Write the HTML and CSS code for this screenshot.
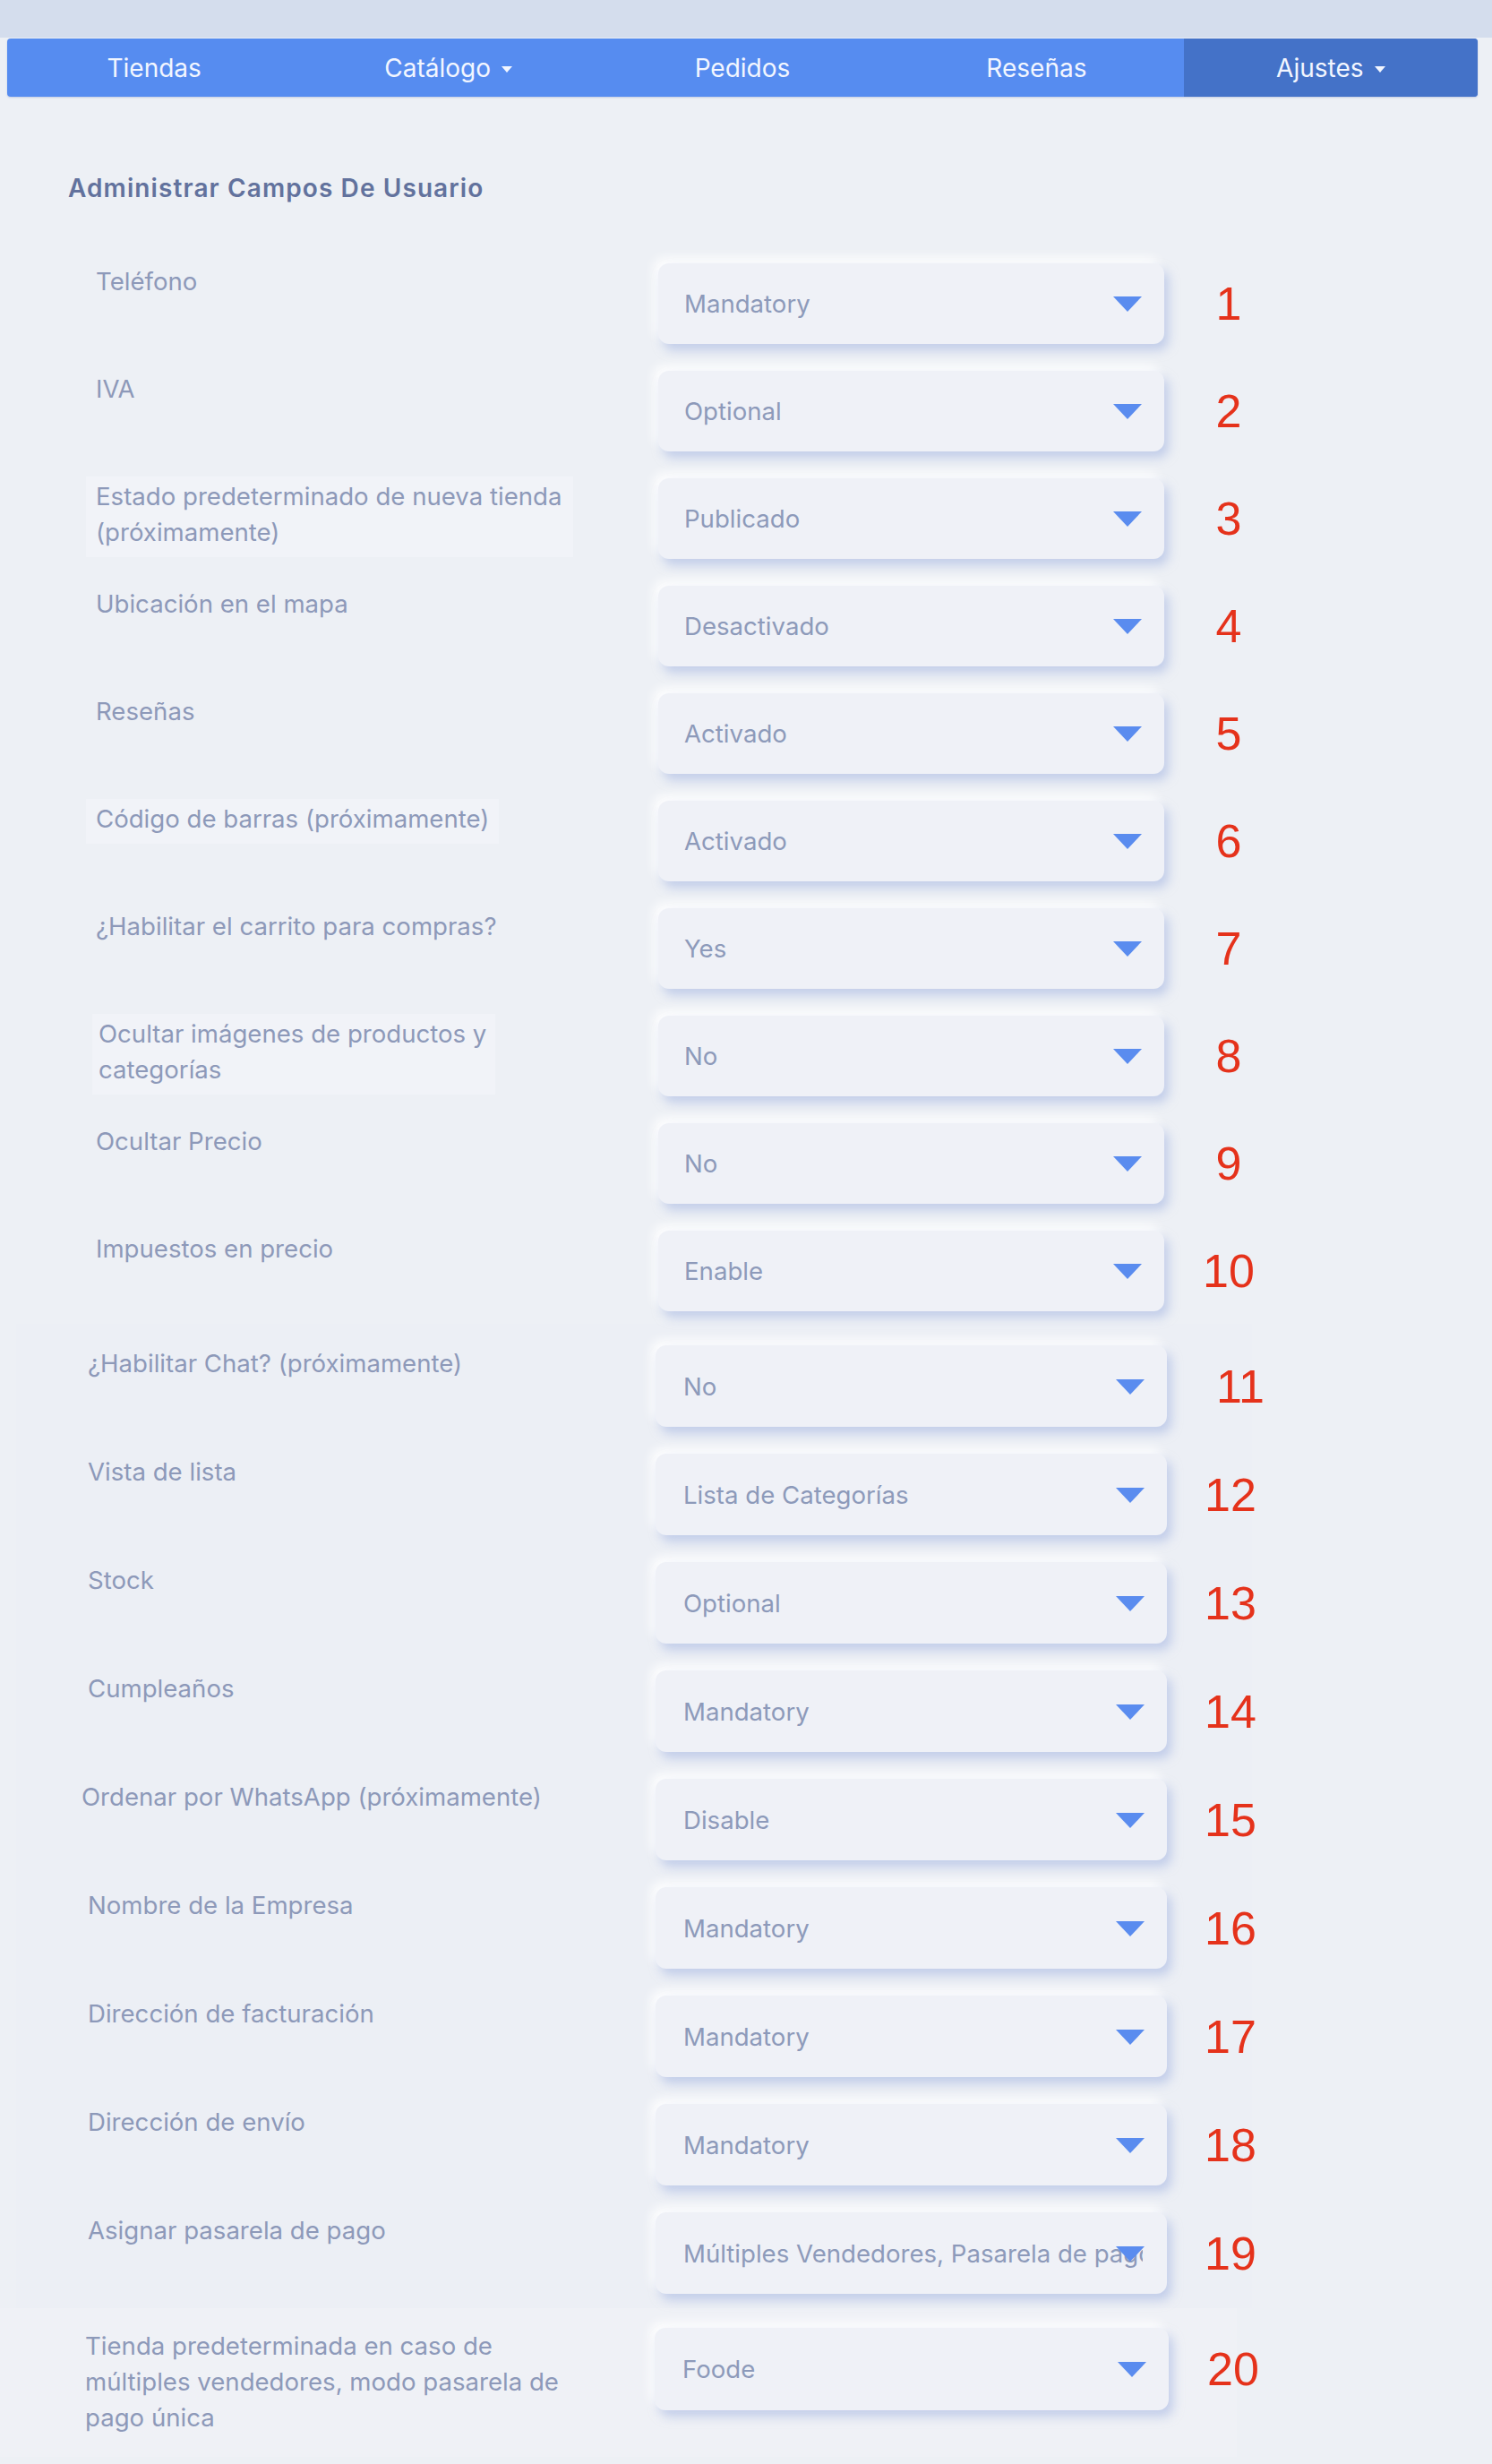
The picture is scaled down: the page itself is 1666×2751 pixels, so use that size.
FILE: index.html
```html
<!DOCTYPE html>
<html lang="es">
<head>
<meta charset="utf-8">
<title>Administrar Campos De Usuario</title>
<link rel="stylesheet" href="styles.css">
</head>
<body>
<div class="topband"></div>
<nav class="nav">
  <a class="nav-item">Tiendas</a>
  <a class="nav-item">Catálogo <span class="caret"></span></a>
  <a class="nav-item">Pedidos</a>
  <a class="nav-item">Reseñas</a>
  <a class="nav-item active">Ajustes <span class="caret"></span></a>
</nav>

<h1 class="heading">Administrar Campos De Usuario</h1>

<section class="group group-a">
  <div class="row"><div class="label"><span>Teléfono</span></div><div class="select"><span class="value">Mandatory</span><span class="arrow"></span></div><div class="num">1</div></div>
  <div class="row"><div class="label"><span>IVA</span></div><div class="select"><span class="value">Optional</span><span class="arrow"></span></div><div class="num">2</div></div>
  <div class="row"><div class="label"><span class="hl hl-wide">Estado predeterminado de nueva tienda (próximamente)</span></div><div class="select"><span class="value">Publicado</span><span class="arrow"></span></div><div class="num">3</div></div>
  <div class="row"><div class="label"><span>Ubicación en el mapa</span></div><div class="select"><span class="value">Desactivado</span><span class="arrow"></span></div><div class="num">4</div></div>
  <div class="row"><div class="label"><span>Reseñas</span></div><div class="select"><span class="value">Activado</span><span class="arrow"></span></div><div class="num">5</div></div>
  <div class="row"><div class="label"><span class="hl">Código de barras (próximamente)</span></div><div class="select"><span class="value">Activado</span><span class="arrow"></span></div><div class="num">6</div></div>
  <div class="row"><div class="label"><span>¿Habilitar el carrito para compras?</span></div><div class="select"><span class="value">Yes</span><span class="arrow"></span></div><div class="num">7</div></div>
  <div class="row"><div class="label"><span class="hl hl-narrow">Ocultar imágenes de productos y categorías</span></div><div class="select"><span class="value">No</span><span class="arrow"></span></div><div class="num">8</div></div>
  <div class="row"><div class="label"><span>Ocultar Precio</span></div><div class="select"><span class="value">No</span><span class="arrow"></span></div><div class="num">9</div></div>
  <div class="row"><div class="label"><span>Impuestos en precio</span></div><div class="select"><span class="value">Enable</span><span class="arrow"></span></div><div class="num">10</div></div>
</section>

<section class="group group-b">
  <div class="row"><div class="label"><span>¿Habilitar Chat? (próximamente)</span></div><div class="select"><span class="value">No</span><span class="arrow"></span></div><div class="num num-shift">11</div></div>
  <div class="row"><div class="label"><span>Vista de lista</span></div><div class="select"><span class="value">Lista de Categorías</span><span class="arrow"></span></div><div class="num">12</div></div>
  <div class="row"><div class="label"><span>Stock</span></div><div class="select"><span class="value">Optional</span><span class="arrow"></span></div><div class="num">13</div></div>
  <div class="row"><div class="label"><span>Cumpleaños</span></div><div class="select"><span class="value">Mandatory</span><span class="arrow"></span></div><div class="num">14</div></div>
  <div class="row"><div class="label label-left"><span>Ordenar por WhatsApp (próximamente)</span></div><div class="select"><span class="value">Disable</span><span class="arrow"></span></div><div class="num">15</div></div>
  <div class="row"><div class="label"><span>Nombre de la Empresa</span></div><div class="select"><span class="value">Mandatory</span><span class="arrow"></span></div><div class="num">16</div></div>
  <div class="row"><div class="label"><span>Dirección de facturación</span></div><div class="select"><span class="value">Mandatory</span><span class="arrow"></span></div><div class="num">17</div></div>
  <div class="row"><div class="label"><span>Dirección de envío</span></div><div class="select"><span class="value">Mandatory</span><span class="arrow"></span></div><div class="num">18</div></div>
  <div class="row"><div class="label"><span>Asignar pasarela de pago</span></div><div class="select"><span class="value">Múltiples Vendedores, Pasarela de pago única</span><span class="arrow"></span></div><div class="num">19</div></div>
</section>

<section class="group group-c">
  <div class="row"><div class="label"><span>Tienda predeterminada en caso de múltiples vendedores, modo pasarela de pago única</span></div><div class="select"><span class="value">Foode</span><span class="arrow"></span></div><div class="num">20</div></div>
</section>
</body>
</html>
```

FILE: styles.css
```css
html, body {
  margin: 0;
  padding: 0;
}
body {
  background: #edf0f5;
  font-family: "Inter", "Noto Sans", sans-serif;
  min-height: 2751px;
}

.topband {
  height: 42px;
  background: #d4dded;
}

.nav {
  display: grid;
  grid-template-columns: repeat(5, 1fr);
  height: 65px;
  margin: 1px 16px 0 8px;
  background: #568cf0;
  border-radius: 4px;
  box-shadow: 0 1px 2px rgba(70, 100, 170, 0.25);
}
.nav-item {
  display: flex;
  align-items: center;
  justify-content: center;
  gap: 12px;
  color: #f2f6ff;
  font-size: 28px;
  line-height: 1;
}
.nav-item.active {
  background: #4472c8;
  border-radius: 0 4px 4px 0;
}
.caret {
  width: 0;
  height: 0;
  border-left: 6px solid transparent;
  border-right: 6px solid transparent;
  border-top: 7px solid #f2f6ff;
  margin-top: 3px;
}

.heading {
  margin: 82px 0 0 76px;
  font-size: 28px;
  line-height: 40px;
  font-weight: 600;
  letter-spacing: 1.1px;
  color: #62729d;
}

.group {
  display: flex;
  flex-direction: column;
  gap: 30px;
}
.group-a {
  margin-top: 64px;
  padding: 0 0 14px 107px;
}
.group-b {
  margin-left: 18px;
  width: 1380px;
  padding: 24px 0 16px 80px;
  box-sizing: border-box;
  background: #eceff5;
}
.group-c {
  width: 1381px;
  padding: 22px 0 24px 95px;
  box-sizing: border-box;
  background: #eff1f6;
}

.row {
  display: flex;
  align-items: flex-start;
}

.label {
  flex: none;
  width: 628px;
  font-size: 27.6px;
  line-height: 40px;
  color: #8d99b9;
}
.label span {
  display: inline-block;
  max-width: 560px;
}
.label .hl {
  background: #f1f3f8;
  padding: 2px 11px 8px;
  margin: -2px 0 0 -11px;
}
.label .hl-wide {
  width: 522px;
}
.label .hl-narrow {
  width: 436px;
  padding-left: 7px;
  padding-right: 7px;
  margin-left: -4px;
}
.group-b .label { width: 634px; }
.group-b .label-left { margin-left: -7px; width: 641px; }
.group-c .label { width: 636px; }

.select {
  flex: none;
  position: relative;
  display: flex;
  align-items: center;
  box-sizing: border-box;
  width: 565px;
  height: 90px;
  padding: 0 27px 0 29px;
  background: #eff1f7;
  border-radius: 12px;
  box-shadow: 5px 7px 12px rgba(158, 176, 224, 0.55),
              -5px -6px 12px rgba(255, 255, 255, 0.95);
}
.group-b .select { width: 571px; height: 91px; padding-left: 31px; }
.group-c .select { width: 574px; height: 92px; padding-left: 31px; }

.value {
  flex: 1;
  min-width: 0;
  overflow: hidden;
  white-space: nowrap;
  font-size: 27.6px;
  line-height: 40px;
  color: #8d9aba;
}
.arrow {
  position: absolute;
  right: 25px;
  top: 50%;
  margin-top: -8px;
  width: 0;
  height: 0;
  border-left: 16px solid transparent;
  border-right: 16px solid transparent;
  border-top: 17px solid #5a8cef;
}

.num {
  flex: none;
  width: 144px;
  height: 90px;
  display: flex;
  align-items: center;
  justify-content: center;
  font-family: "Liberation Sans", Arial, sans-serif;
  font-size: 52px;
  line-height: 1;
  color: #e5321b;
}
.group-b .num { width: 142px; height: 91px; }
.group-b .num-shift { padding-left: 22px; box-sizing: border-box; }
.group-c .num { height: 92px; }
```
